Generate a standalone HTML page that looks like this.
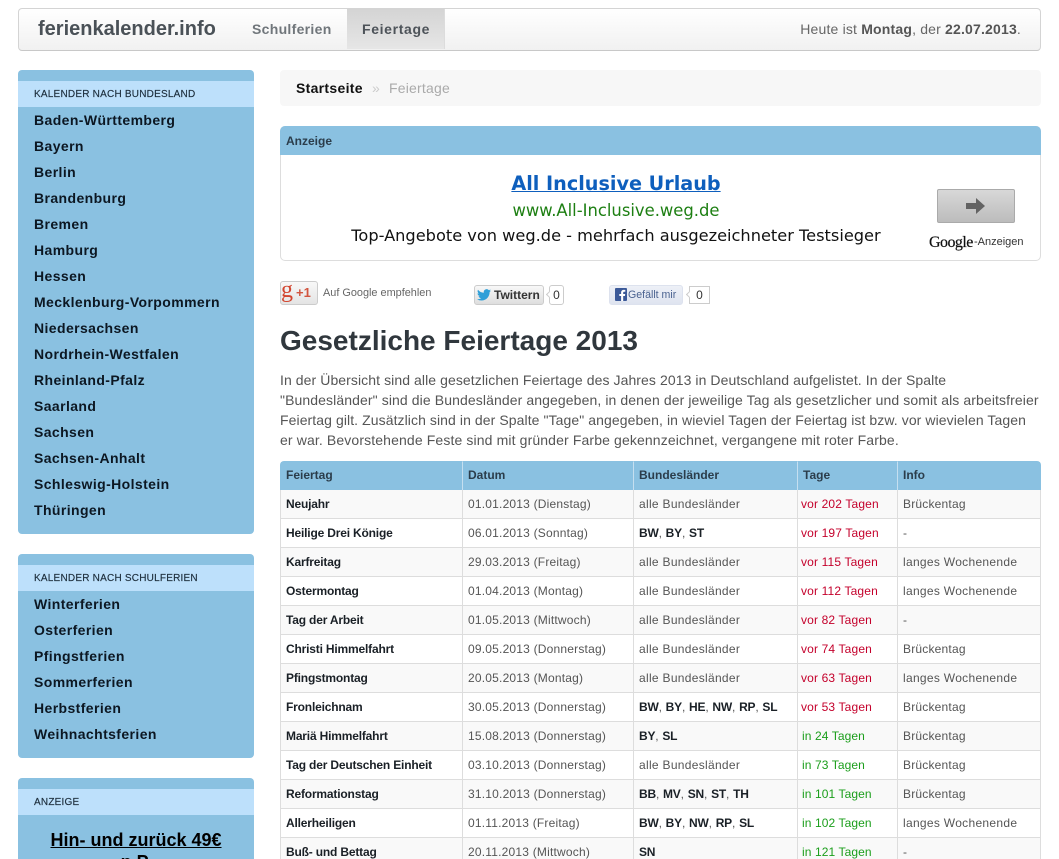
<!DOCTYPE html>
<html lang="de">
<head>
<meta charset="utf-8">
<title>Gesetzliche Feiertage 2013</title>
<style>
html,body{margin:0;padding:0;background:#fff;height:859px;overflow:hidden;}
#w{position:relative;width:1059px;height:859px;overflow:hidden;font-family:"Liberation Sans",Arial,sans-serif;color:#444;}
.a{position:absolute;white-space:nowrap;}
.box{position:absolute;left:18px;width:236px;background:#8ac1e1;border-radius:4px;}
.box .lab{position:absolute;left:0;right:0;top:11px;height:26px;background:#bde0fb;font-size:10px;line-height:28px;padding-left:16px;color:#1c2d3b;letter-spacing:.22px;-webkit-text-stroke:.15px #1c2d3b;}
.box .l{position:absolute;left:16px;font-size:14px;font-weight:bold;color:#0c1722;line-height:18px;white-space:nowrap;letter-spacing:.4px;}
table{position:absolute;left:280px;top:461px;width:761px;border-collapse:separate;border-spacing:0;table-layout:fixed;font-size:12px;}
th{height:29px;padding:0 0 2px 5px;background:#8ac1e1;color:#2b3d4b;text-align:left;font-size:12px;border-right:1px solid #c5dff0;border-top:1px solid #8ac1e1;box-sizing:border-box;}
th:first-child{border-top-left-radius:4px;border-left:1px solid #8ac1e1;}
th:last-child{border-top-right-radius:4px;border-right:1px solid #8ac1e1;}
td{height:29px;padding:0 0 0 5px;box-sizing:border-box;border-right:1px solid #ddd;border-bottom:1px solid #ddd;color:#555;white-space:nowrap;letter-spacing:.2px;}
td:first-child{border-left:1px solid #ddd;font-weight:bold;color:#1a2026;letter-spacing:-.18px;}
td.w{letter-spacing:.3px;}
tr.o td{background:#f9f9f9;}
b.k{color:#1a2026;letter-spacing:-.2px;}
.r{color:#c4002b;padding-left:3px;letter-spacing:.15px;}
.g{color:#1b9e1b;padding-left:4px;letter-spacing:.1px;}
</style>
</head>
<body>
<div id="w">
<div class="a" style="left:18px;top:8px;width:1021px;height:41px;border:1px solid #d4d4d4;border-bottom-color:#c8c8c8;border-radius:4px;background:linear-gradient(#fff,#f1f1f1);"></div>
<div class="a" style="left:347px;top:9px;width:98px;height:40px;background:linear-gradient(#d4d4d4,#e6e6e6);border-right:1px solid #dcdcdc;box-sizing:border-box;"></div>
<div class="a" style="left:38px;top:17px;font-size:20px;font-weight:bold;color:#4a5157;line-height:24px;">ferienkalender.info</div>
<div class="a" style="left:252px;top:21px;font-size:14px;font-weight:bold;color:#70767b;line-height:17px;letter-spacing:.3px;">Schulferien</div>
<div class="a" style="left:362px;top:21px;font-size:14px;font-weight:bold;color:#4d5359;line-height:17px;letter-spacing:.65px;">Feiertage</div>
<div class="a" style="right:38px;top:21px;font-size:14px;color:#666;line-height:17px;letter-spacing:.18px;">Heute ist <b style="color:#555">Montag</b>, der <b style="color:#555">22.07.2013</b>.</div>

<div class="box" style="top:70px;height:464px;">
<div class="lab">KALENDER NACH BUNDESLAND</div>
<div class="l" style="top:41px">Baden-Württemberg</div>
<div class="l" style="top:67px">Bayern</div>
<div class="l" style="top:93px">Berlin</div>
<div class="l" style="top:119px">Brandenburg</div>
<div class="l" style="top:145px">Bremen</div>
<div class="l" style="top:171px">Hamburg</div>
<div class="l" style="top:197px">Hessen</div>
<div class="l" style="top:223px">Mecklenburg-Vorpommern</div>
<div class="l" style="top:249px">Niedersachsen</div>
<div class="l" style="top:275px">Nordrhein-Westfalen</div>
<div class="l" style="top:301px">Rheinland-Pfalz</div>
<div class="l" style="top:327px">Saarland</div>
<div class="l" style="top:353px">Sachsen</div>
<div class="l" style="top:379px">Sachsen-Anhalt</div>
<div class="l" style="top:405px">Schleswig-Holstein</div>
<div class="l" style="top:431px">Thüringen</div>
</div>

<div class="box" style="top:554px;height:204px;">
<div class="lab">KALENDER NACH SCHULFERIEN</div>
<div class="l" style="top:41px">Winterferien</div>
<div class="l" style="top:67px">Osterferien</div>
<div class="l" style="top:93px">Pfingstferien</div>
<div class="l" style="top:119px">Sommerferien</div>
<div class="l" style="top:145px">Herbstferien</div>
<div class="l" style="top:171px">Weihnachtsferien</div>
</div>

<div class="box" style="top:778px;height:120px;">
<div class="lab">ANZEIGE</div>
<div class="a" style="left:0;width:236px;top:51px;text-align:center;font-size:18px;font-weight:bold;line-height:22px;color:#000;white-space:normal;"><span style="text-decoration:underline">Hin- und zurück 49€</span><br><span style="text-decoration:underline">p.P.</span></div>
</div>

<div class="a" style="left:280px;top:70px;width:761px;height:36px;background:#f7f7f7;border-radius:4px;"></div>
<div class="a" style="left:296px;top:80px;font-size:14px;line-height:17px;font-weight:bold;color:#111;letter-spacing:.3px;">Startseite</div>
<div class="a" style="left:372px;top:80px;font-size:14px;line-height:17px;color:#ccc;">»</div>
<div class="a" style="left:389px;top:80px;font-size:14px;line-height:17px;color:#aaa;letter-spacing:.2px;">Feiertage</div>

<div class="a" style="left:280px;top:126px;width:759px;height:133px;border:1px solid #ddd;border-radius:5px;background:#fff;"></div>
<div class="a" style="left:280px;top:126px;width:761px;height:29px;background:#8ac1e1;border-radius:5px 5px 0 0;"></div>
<div class="a" style="left:286px;top:134px;font-size:12px;line-height:15px;font-weight:bold;color:#2b3d4b;">Anzeige</div>
<div class="a" style="left:281px;width:670px;top:171px;text-align:center;font-family:'DejaVu Sans',sans-serif;font-size:19.2px;line-height:26px;font-weight:bold;color:#0e5fbd;text-decoration:underline;">All Inclusive Urlaub</div>
<div class="a" style="left:281px;width:670px;top:201px;text-align:center;font-family:'DejaVu Sans',sans-serif;font-size:16.4px;line-height:20px;color:#1d7f12;">www.All-Inclusive.weg.de</div>
<div class="a" style="left:281px;width:670px;top:226px;text-align:center;font-family:'DejaVu Sans',sans-serif;font-size:16.2px;line-height:20px;color:#111;">Top-Angebote von weg.de - mehrfach ausgezeichneter Testsieger</div>
<div class="a" style="left:937px;top:189px;width:76px;height:32px;border:1px solid #aaa;border-radius:2px;background:linear-gradient(#d8d8d8,#bcbcbc);"></div>
<svg class="a" style="left:966px;top:197px" width="20" height="18" viewBox="0 0 20 18"><path d="M0 6h10V1l9 8-9 8v-5H0z" fill="#636363"/></svg>
<div class="a" style="left:929px;top:233px;font-family:'Liberation Serif',serif;font-size:16px;line-height:19px;color:#111;letter-spacing:-.55px;-webkit-text-stroke:.2px #111;">Google</div>
<div class="a" style="left:974px;top:236px;font-size:11px;line-height:13px;color:#333;">-Anzeigen</div>

<div class="a" style="left:280px;top:281px;width:36px;height:22px;border:1px solid #ccc;border-radius:3px;background:linear-gradient(#f8f8f8,#e4e4e4);"></div>
<div class="a" style="left:281px;top:277px;font-family:'Liberation Serif',serif;font-size:24px;line-height:26px;color:#d2452f;">g</div>
<div class="a" style="left:296px;top:285px;font-size:13px;line-height:15px;font-weight:bold;color:#d2553f;">+1</div>
<div class="a" style="left:323px;top:287px;font-size:10.9px;line-height:13px;color:#666;">Auf Google empfehlen</div>

<div class="a" style="left:474px;top:285px;width:68px;height:18px;border:1px solid #ccc;border-radius:3px;background:linear-gradient(#f8f8f8,#dedede);"></div>
<svg class="a" style="left:477px;top:289px" width="14" height="12" viewBox="0 0 24 20"><path d="M24 2.4a10 10 0 0 1-2.8.8A5 5 0 0 0 23.300.500a10 10 0 0 1-3.100 1.200A4.900 4.900 0 0 0 11.800 6.200 14 14 0 0 1 1.700.9a4.900 4.900 0 0 0 1.500 6.600A4.900 4.900 0 0 1 1 6.900a4.900 4.900 0 0 0 3.900 4.900 5 5 0 0 1-2.200.1 4.900 4.900 0 0 0 4.600 3.400A9.900 9.900 0 0 1 0 17.300 14 14 0 0 0 7.500 19.500c9.100 0 14.100-7.500 14.100-14v-.6A10 10 0 0 0 24 2.400z" fill="#2f9fd8"/></svg>
<div class="a" style="left:494px;top:288px;font-size:12px;line-height:14px;font-weight:bold;color:#333;">Twittern</div>
<div class="a" style="left:549px;top:285px;width:13px;height:18px;border:1px solid #ccc;border-radius:3px;font-size:12px;line-height:19px;text-align:center;color:#333;background:#fff;">0</div>
<div class="a" style="left:547px;top:292px;width:4px;height:4px;background:#fff;border-left:1px solid #ccc;border-bottom:1px solid #ccc;transform:rotate(45deg);"></div>

<div class="a" style="left:609px;top:285px;width:72px;height:18px;border:1px solid #dde2ee;border-radius:3px;background:linear-gradient(#edf0f7,#dfe4f0);"></div>
<svg class="a" style="left:615px;top:288px" width="12" height="13" viewBox="0 0 12 13"><rect width="12" height="13" rx="1" fill="#3b5998"/><path d="M8.200 13V8h1.700l.3-2H8.200V4.800c0-.6.200-1 1-1h1.100V2c-.5-.1-1-.1-1.500-.1-1.700 0-2.700 1-2.700 2.700V6H4.300v2h1.800v5z" fill="#fff"/></svg>
<div class="a" style="left:628px;top:288px;font-size:10.6px;line-height:14px;color:#4a6290;">Gefällt mir</div>
<div class="a" style="left:689px;top:286px;width:19px;height:16px;border:1px solid #ccc;font-size:12px;line-height:17px;text-align:center;color:#333;background:#fff;">0</div>
<div class="a" style="left:687px;top:292px;width:4px;height:4px;background:#fff;border-left:1px solid #ccc;border-bottom:1px solid #ccc;transform:rotate(45deg);"></div>

<div class="a" style="left:280px;top:324px;font-size:28px;line-height:33px;font-weight:bold;color:#30373d;">Gesetzliche Feiertage 2013</div>

<div class="a" style="left:280px;top:370px;width:761px;font-size:14px;line-height:20px;color:#555;white-space:normal;">
<div class="a" style="left:0;top:0;letter-spacing:.08px;">In der Übersicht sind alle gesetzlichen Feiertage des Jahres 2013 in Deutschland aufgelistet. In der Spalte</div>
<div class="a" style="left:0;top:20px;letter-spacing:.1px;">"Bundesländer" sind die Bundesländer angegeben, in denen der jeweilige Tag als gesetzlicher und somit als arbeitsfreier</div>
<div class="a" style="left:0;top:40px;letter-spacing:.08px;">Feiertag gilt. Zusätzlich sind in der Spalte "Tage" angegeben, in wieviel Tagen der Feiertag ist bzw. vor wievielen Tagen</div>
<div class="a" style="left:0;top:60px;letter-spacing:.126px;">er war. Bevorstehende Feste sind mit gründer Farbe gekennzeichnet, vergangene mit roter Farbe.</div>
</div>

<table>
<colgroup><col style="width:183px"><col style="width:171px"><col style="width:164px"><col style="width:100px"><col style="width:143px"></colgroup>
<tr><th>Feiertag</th><th>Datum</th><th>Bundesländer</th><th>Tage</th><th>Info</th></tr>
<tr class="o"><td>Neujahr</td><td>01.01.2013 (Dienstag)</td><td class="w">alle Bundesländer</td><td class="r">vor 202 Tagen</td><td>Brückentag</td></tr>
<tr><td>Heilige Drei Könige</td><td>06.01.2013 (Sonntag)</td><td><b class="k">BW</b>, <b class="k">BY</b>, <b class="k">ST</b></td><td class="r">vor 197 Tagen</td><td>-</td></tr>
<tr class="o"><td>Karfreitag</td><td>29.03.2013 (Freitag)</td><td class="w">alle Bundesländer</td><td class="r">vor 115 Tagen</td><td class="w">langes Wochenende</td></tr>
<tr><td>Ostermontag</td><td>01.04.2013 (Montag)</td><td class="w">alle Bundesländer</td><td class="r">vor 112 Tagen</td><td class="w">langes Wochenende</td></tr>
<tr class="o"><td>Tag der Arbeit</td><td>01.05.2013 (Mittwoch)</td><td class="w">alle Bundesländer</td><td class="r">vor 82 Tagen</td><td>-</td></tr>
<tr><td>Christi Himmelfahrt</td><td>09.05.2013 (Donnerstag)</td><td class="w">alle Bundesländer</td><td class="r">vor 74 Tagen</td><td>Brückentag</td></tr>
<tr class="o"><td>Pfingstmontag</td><td>20.05.2013 (Montag)</td><td class="w">alle Bundesländer</td><td class="r">vor 63 Tagen</td><td class="w">langes Wochenende</td></tr>
<tr><td>Fronleichnam</td><td>30.05.2013 (Donnerstag)</td><td><b class="k">BW</b>, <b class="k">BY</b>, <b class="k">HE</b>, <b class="k">NW</b>, <b class="k">RP</b>, <b class="k">SL</b></td><td class="r">vor 53 Tagen</td><td>Brückentag</td></tr>
<tr class="o"><td>Mariä Himmelfahrt</td><td>15.08.2013 (Donnerstag)</td><td><b class="k">BY</b>, <b class="k">SL</b></td><td class="g">in 24 Tagen</td><td>Brückentag</td></tr>
<tr><td>Tag der Deutschen Einheit</td><td>03.10.2013 (Donnerstag)</td><td class="w">alle Bundesländer</td><td class="g">in 73 Tagen</td><td>Brückentag</td></tr>
<tr class="o"><td>Reformationstag</td><td>31.10.2013 (Donnerstag)</td><td><b class="k">BB</b>, <b class="k">MV</b>, <b class="k">SN</b>, <b class="k">ST</b>, <b class="k">TH</b></td><td class="g">in 101 Tagen</td><td>Brückentag</td></tr>
<tr><td>Allerheiligen</td><td>01.11.2013 (Freitag)</td><td><b class="k">BW</b>, <b class="k">BY</b>, <b class="k">NW</b>, <b class="k">RP</b>, <b class="k">SL</b></td><td class="g">in 102 Tagen</td><td class="w">langes Wochenende</td></tr>
<tr class="o"><td>Buß- und Bettag</td><td>20.11.2013 (Mittwoch)</td><td><b class="k">SN</b></td><td class="g">in 121 Tagen</td><td>-</td></tr>
</table>
</div>
</body>
</html>
